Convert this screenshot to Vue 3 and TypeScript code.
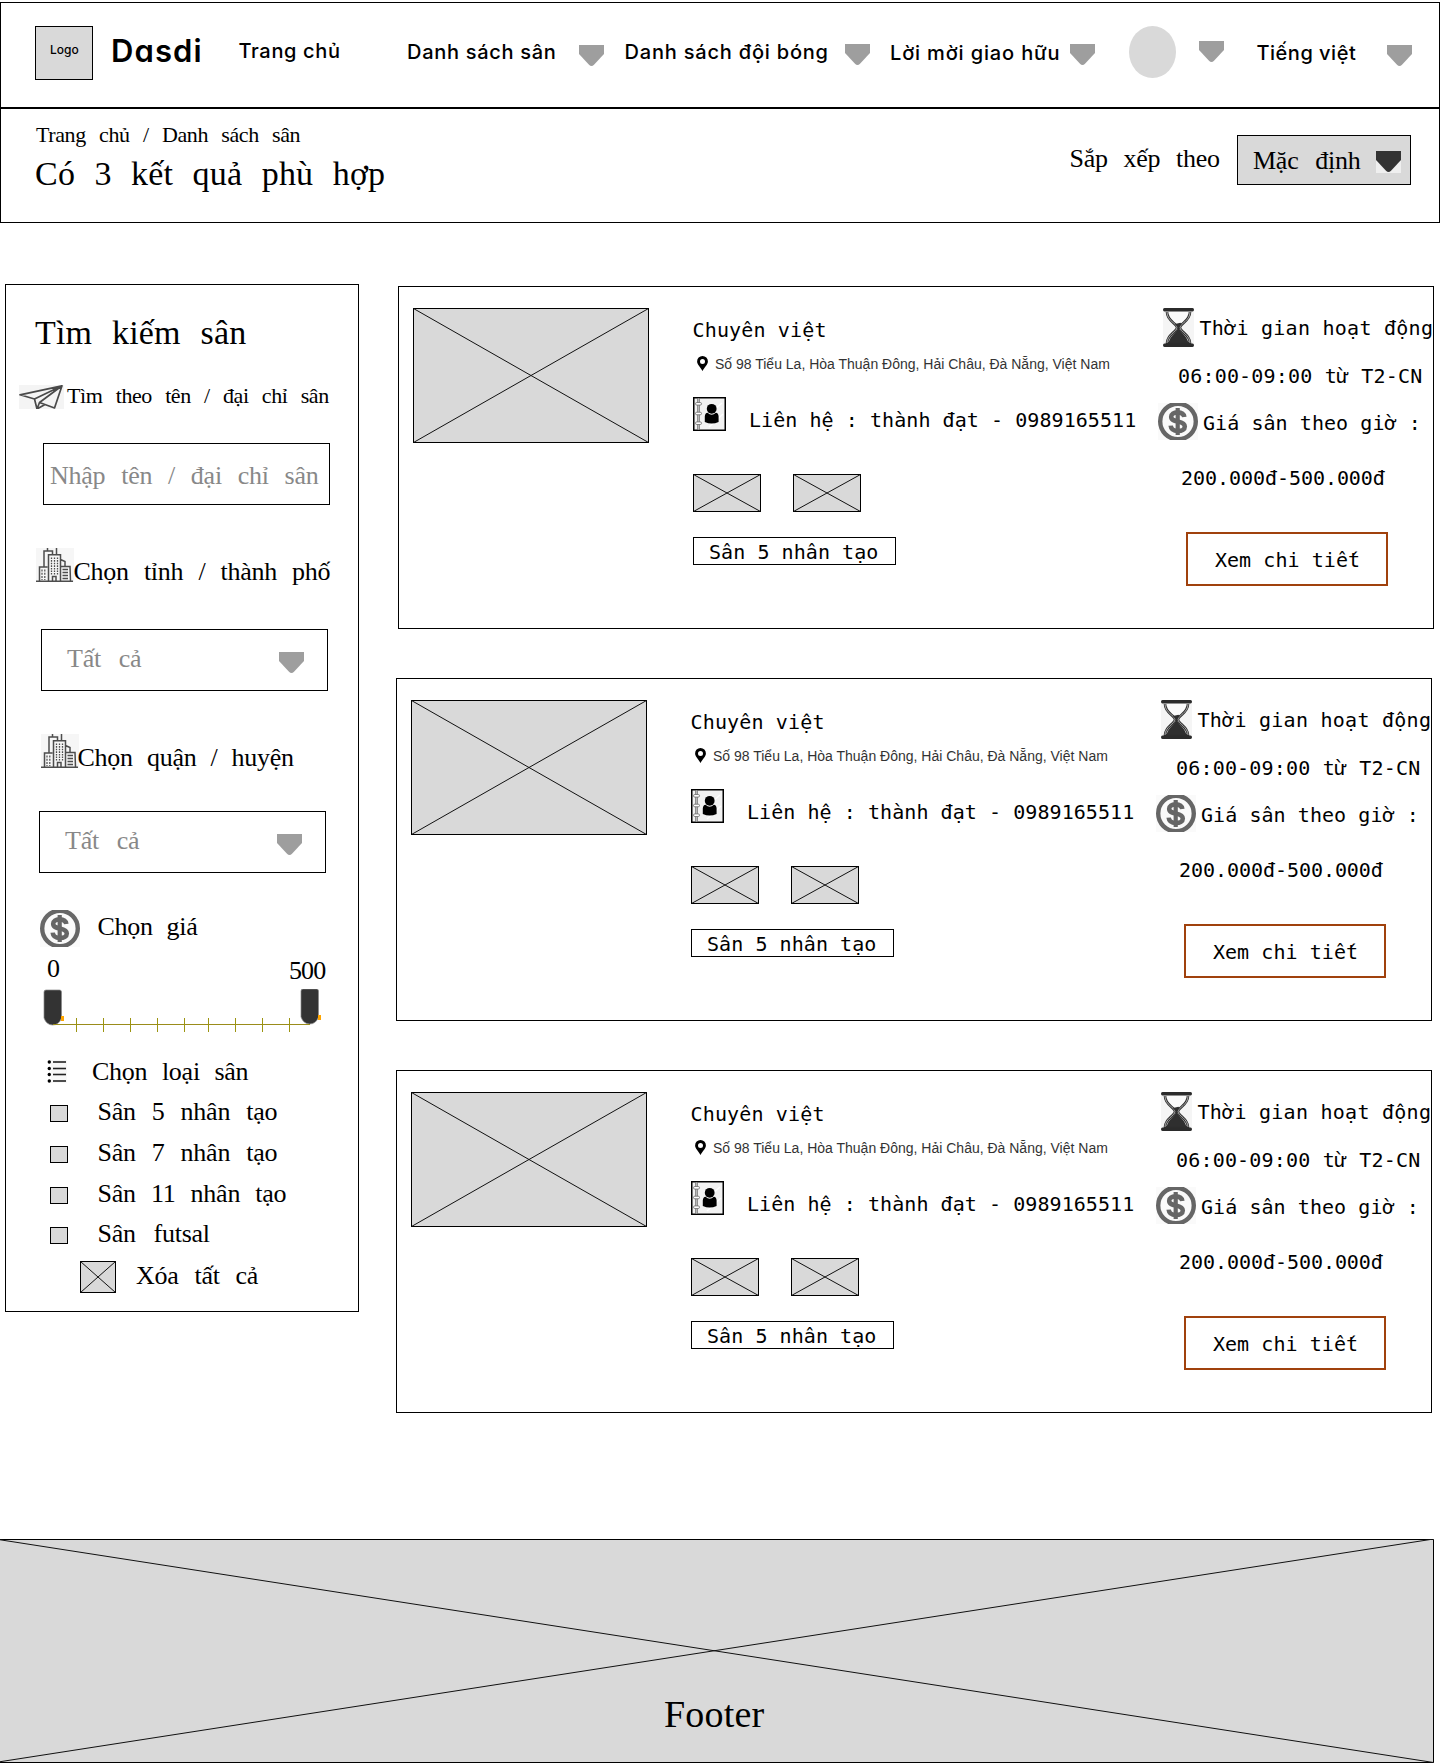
<script setup lang="ts">
interface FieldType {
  id: string
  label: string
}

interface Venue {
  id: number
  name: string
  address: string
  contact: string
  hours: string
  price: string
  tag: string
}

const fieldTypes: FieldType[] = [
  { id: 'five', label: 'Sân 5 nhân tạo' },
  { id: 'seven', label: 'Sân 7 nhân tạo' },
  { id: 'eleven', label: 'Sân 11 nhân tạo' },
  { id: 'futsal', label: 'Sân futsal' },
]

const venues: Venue[] = [1, 2, 3].map((id) => ({
  id,
  name: 'Chuyên việt',
  address: 'Số 98 Tiểu La, Hòa Thuận Đông, Hải Châu, Đà Nẵng, Việt Nam',
  contact: 'Liên hệ : thành đạt - 0989165511',
  hours: '06:00-09:00 từ T2-CN',
  price: '200.000đ-500.000đ',
  tag: 'Sân 5 nhân tạo',
}))

const ticks = [33.5, 60.5, 87.5, 114.5, 141.5, 165.5, 192.5, 219.5, 246.5]
</script>

<template>
  <svg class="defs" width="0" height="0" aria-hidden="true">
    <symbol id="caret" viewBox="0 0 25 22">
      <path d="M0 0H25V9L15 19.8Q12.5 22.2 10 19.8L0 9Z" fill="currentColor" />
    </symbol>
    <symbol id="coin" viewBox="0 0 40 37">
      <rect width="40" height="37" fill="#fafafa" />
      <circle cx="20" cy="18.5" r="17.8" fill="none" stroke="#666" stroke-width="4.4" />
      <path d="M26.3 14C25.8 10.8 23.4 9.4 19.6 9.4C15.6 9.4 13.2 11 13.2 13.8C13.2 16.8 15.8 17.5 19.8 18.4C24.2 19.4 26.8 20.4 26.8 23.4C26.8 26.3 24 27.9 20 27.9C15.6 27.9 13 26 12.7 22.6" fill="none" stroke="#666" stroke-width="4.6" />
      <path d="M19.7 5V32" stroke="#666" stroke-width="4.2" />
    </symbol>
    <symbol id="city" viewBox="0 0 38 34">
      <rect width="38" height="34" fill="#f6f6f6" />
      <g fill="none" stroke="#4d4d4d" stroke-width="1.5">
        <path d="M0 33.3H37M3.5 33V19H11.5M8 19V3H16.5V7M11.5 3V0M20.5 6.5V0M12.5 33V6.8H24.5V33M24.5 11.5L29 13.5V18.5M24.5 18.5H34L34.5 33M16.5 33V28.5H20V33" />
        <path d="M6 21.5V32M8.8 21.5V32" stroke-dasharray="2 1.2" stroke-width="1.2" />
        <path d="M15.5 9.5V26.5M18.5 9.5V26.5M21.5 9.5V26.5" stroke-dasharray="1.6 1" stroke-width="1.3" />
        <path d="M26.5 21.5H32M26.5 24.5H32M26.5 27.5H32M26.5 30.5H32" stroke-width="1.3" />
      </g>
    </symbol>
    <symbol id="hourglass" viewBox="0 0 31 39">
      <rect width="31" height="39" fill="#f5f5f5" />
      <path d="M4 4C4 13 14 15.5 14 19.5C14 23.5 4 27 4 35H27C27 27 17 23.5 17 19.5C17 15.5 27 13 27 4" fill="#fafafa" stroke="#2f2f2f" stroke-width="2.6" />
      <path d="M4 4C4 13 14 15.5 14 19.5C14 23.5 4 27 4 35M27 35C27 27 17 23.5 17 19.5C17 15.5 27 13 27 4" fill="none" stroke="#ddd" stroke-width=".7" />
      <path d="M12 16L17.5 14.8L18.5 16L16.2 19.5C16.2 24 24 27 25.3 34.5H5.7C7 27 14.8 24 14.8 19.5Z" fill="#2f2f2f" />
      <path d="M1.5 0H29.5Q31 0 31 1.7T29.5 3.4H1.5Q0 3.4 0 1.7T1.5 0ZM1.5 35.6H29.5Q31 35.6 31 37.3T29.5 39H1.5Q0 39 0 37.3T1.5 35.6Z" fill="#2b2b2b" />
    </symbol>
    <symbol id="contact" viewBox="0 0 33 34">
      <rect x=".75" y=".75" width="31.5" height="32.5" fill="#f2f2f2" stroke="#000" stroke-width="1.5" />
      <path d="M20 14L29 6M16 30L30 17" stroke="#fff" stroke-width="1.5" />
      <path d="M5.5 1.5V32.5" stroke="#666" stroke-width="2.4" />
      <path d="M5.5 1.5V32.5" stroke="#ddd" stroke-width=".7" />
      <g fill="#fff" stroke="#777" stroke-width=".9">
        <rect x="2.5" y="5.5" width="6" height="2.6" rx="1.3" />
        <rect x="2.5" y="15.2" width="6" height="2.6" rx="1.3" />
        <rect x="2.5" y="24.9" width="6" height="2.6" rx="1.3" />
      </g>
      <circle cx="18.7" cy="11.8" r="4.9" />
      <path d="M11.8 25V19.5Q12 16 14.6 15.8Q18.7 19.6 22.8 15.8Q25.4 16 25.6 19.5V25Q18.7 28 11.8 25Z" />
    </symbol>
    <symbol id="pin" viewBox="0 0 11 15">
      <path d="M5.5 0A5.4 5.4 0 0 1 10.9 5.5C10.9 8.5 7.3 11.5 5.5 15C3.7 11.5 .1 8.5 .1 5.5A5.4 5.4 0 0 1 5.5 0ZM5.5 3A2.5 2.5 0 1 0 5.5 8A2.5 2.5 0 1 0 5.5 3Z" fill-rule="evenodd" />
    </symbol>
    <symbol id="plane" viewBox="0 0 45 24">
      <rect width="45" height="24" fill="#f4f4f4" />
      <path d="M43 .8L1 9.8L15.5 14L43 .8L35.5 23L20.5 17.5L43 .8M15.5 14L18 24L20.5 17.5M18 24L26 19.5" fill="none" stroke="#4a4a4a" stroke-width="1.7" stroke-linejoin="round" />
    </symbol>
    <symbol id="thumb" viewBox="0 0 68 38">
      <rect x=".5" y=".5" width="67" height="37" fill="#d9d9d9" stroke="#000" />
      <path d="M.5 .5L67.5 37.5M67.5 .5L.5 37.5" stroke="#111" />
    </symbol>
  </svg>

  <div class="page">
    <header class="topbar">
      <div class="logo">Logo</div>
      <div class="brand">Dasdi</div>
      <a class="nav home">Trang chủ</a>
      <a class="nav fields">Danh sách sân</a>
      <svg class="caret low"><use href="#caret" /></svg>
      <a class="nav teams">Danh sách đội bóng</a>
      <svg class="caret"><use href="#caret" /></svg>
      <a class="nav invites">Lời mời giao hữu</a>
      <svg class="caret"><use href="#caret" /></svg>
      <div class="avatar"></div>
      <svg class="caret high"><use href="#caret" /></svg>
      <a class="nav lang">Tiếng việt</a>
      <svg class="caret low"><use href="#caret" /></svg>
    </header>

    <section class="heading">
      <div class="heading-text">
        <div class="crumbs">Trang chủ / Danh sách sân</div>
        <h1 class="result-title">Có 3 kết quả phù hợp</h1>
      </div>
      <div class="sort-label label">Sắp xếp theo</div>
      <div class="sort-select">
        <span class="label">Mặc định</span>
        <svg class="caret"><use href="#caret" /></svg>
      </div>
    </section>

    <main class="content">
      <aside class="sidebar">
        <h2 class="side-title">Tìm kiếm sân</h2>
        <div class="plane-row">
          <svg width="45" height="24"><use href="#plane" /></svg>
          <span>Tìm theo tên / đại chỉ sân</span>
        </div>
        <div class="search-input label">Nhập tên / đại chỉ sân</div>

        <div class="city-row">
          <svg width="38" height="34"><use href="#city" /></svg>
          <span class="label">Chọn tỉnh / thành phố</span>
        </div>
        <div class="select">
          <span class="label">Tất cả</span>
          <svg class="caret"><use href="#caret" /></svg>
        </div>

        <div class="city-row district">
          <svg width="38" height="34"><use href="#city" /></svg>
          <span class="label">Chọn quận / huyện</span>
        </div>
        <div class="select second">
          <span class="label">Tất cả</span>
          <svg class="caret"><use href="#caret" /></svg>
        </div>

        <div class="price-row">
          <svg width="40" height="37"><use href="#coin" /></svg>
          <span class="label">Chọn giá</span>
        </div>
        <div class="range-labels label">
          <span>0</span>
          <span class="max">500</span>
        </div>
        <svg class="slider" width="280" height="43" viewBox="0 0 280 43">
          <path d="M1 3Q1 1 3 1H16.5Q18.5 1 18.5 3V29Q16 36 9.7 36Q3.5 36 1 29Z" fill="#333" stroke="#888" stroke-width=".7" />
          <path d="M258 2Q258 0 260 0H273.5Q275.5 0 275.5 2V28Q273 35 266.7 35Q260.5 35 258 28Z" fill="#333" stroke="#888" stroke-width=".7" />
          <rect x="18" y="27" width="3" height="5" fill="#ffa500" />
          <rect x="275" y="26" width="3" height="5" fill="#ffa500" />
          <path d="M10 35.5H267" stroke="#9a8c1a" />
          <path v-for="x in ticks" :key="x" :d="`M${x} 29V43`" stroke="#9c9410" />
        </svg>

        <div class="type-row">
          <svg width="20" height="23" viewBox="0 0 20 23">
            <rect x="4" width="16" height="23" fill="#f8f8f8" />
            <g v-for="y in [2, 8.5, 14.5, 21]" :key="y">
              <circle cx="2.3" :cy="y" r="1.7" />
              <path :d="`M6 ${y}H19`" stroke="#222" stroke-width="1.6" />
            </g>
          </svg>
          <span class="label">Chọn loại sân</span>
        </div>
        <div v-for="type in fieldTypes" :key="type.id" class="check-row" :class="type.id">
          <i class="checkbox"></i>
          <span class="label">{{ type.label }}</span>
        </div>
        <div class="clear-row">
          <svg width="36" height="32" viewBox="0 0 36 32">
            <rect x=".5" y=".5" width="35" height="31" fill="#d9d9d9" stroke="#000" />
            <path d="M.5 .5L35.5 31.5M35.5 .5L.5 31.5" stroke="#111" />
          </svg>
          <span class="label">Xóa tất cả</span>
        </div>
      </aside>

      <section class="venues">
        <article v-for="venue in venues" :key="venue.id" class="card">
          <svg class="photo" width="236" height="135" viewBox="0 0 236 135">
            <rect x=".5" y=".5" width="235" height="134" fill="#d9d9d9" stroke="#000" />
            <path d="M.5 .5L235.5 134.5M235.5 .5L.5 134.5" stroke="#111" />
          </svg>
          <div class="info">
            <h3 class="venue-name mono">{{ venue.name }}</h3>
            <div class="address-row">
              <svg width="11" height="15"><use href="#pin" /></svg>
              <span>{{ venue.address }}</span>
            </div>
            <div class="contact-row">
              <svg width="33" height="34"><use href="#contact" /></svg>
              <span class="mono">{{ venue.contact }}</span>
            </div>
            <div class="thumbs">
              <svg width="68" height="38"><use href="#thumb" /></svg>
              <svg width="68" height="38"><use href="#thumb" /></svg>
            </div>
            <div class="tag mono">{{ venue.tag }}</div>
          </div>
          <div class="details">
            <div class="hours-row">
              <svg width="31" height="39"><use href="#hourglass" /></svg>
              <span class="mono">Thời gian hoạt động</span>
            </div>
            <div class="hours mono">{{ venue.hours }}</div>
            <div class="cost-row">
              <svg width="40" height="37"><use href="#coin" /></svg>
              <span class="mono">Giá sân theo giờ :</span>
            </div>
            <div class="cost mono">{{ venue.price }}</div>
            <button class="detail-button mono" type="button">Xem chi tiết</button>
          </div>
        </article>
      </section>
    </main>

    <footer class="footer">
      <svg width="1434" height="224" viewBox="0 0 1434 224">
        <path d="M0 .5H1433.5V223.5H0" fill="#d9d9d9" stroke="#000" />
        <path d="M-5 0L1433.5 223.5M1433.5 0L-5 223.5" stroke="#111" />
      </svg>
      <span>Footer</span>
    </footer>
  </div>
</template>

<style>
body {
  background: #fff;
}
</style>

<style scoped>
.defs {
  position: absolute;
}

.page {
  width: 1440px;
  height: 1763px;
  padding-top: 2px;
  overflow: hidden;
  color: #000;
  font-family: "Liberation Serif", "Times New Roman", serif;
  white-space: nowrap;
}

.page *,
.page {
  box-sizing: border-box;
}

svg {
  display: block;
  flex: none;
}

h1,
h2,
h3 {
  margin: 0;
  font-weight: 400;
}

.label {
  font-size: 26px;
  line-height: 30px;
  letter-spacing: -0.25px;
  word-spacing: 9px;
}

.mono {
  font-family: "DejaVu Sans Mono", monospace;
  font-size: 20px;
  line-height: 24px;
  letter-spacing: 0.06px;
}

.caret {
  width: 25px;
  height: 22px;
  color: #9e9e9e;
}

/* top navigation */
.topbar {
  display: grid;
  grid-template-columns: 76px 127.5px 168.5px 172px 45.5px 220.5px 45px 180px 59px 70px 57.5px 130.5px 50px;
  align-items: start;
  height: 106px;
  padding-left: 34px;
  border: 1px solid #000;
  font-family: Inter, sans-serif;
  font-weight: 500;
}

.logo {
  width: 58px;
  height: 54px;
  margin-top: 23px;
  padding: 16px 0 0 14px;
  border: 1px solid #000;
  background: #d9d9d9;
  font-size: 12px;
  line-height: 14px;
  font-feature-settings: "cv11";
}

.brand {
  margin-top: 30px;
  font-size: 31px;
  font-weight: 600;
  line-height: 36px;
  letter-spacing: 1.1px;
  font-feature-settings: "cv11";
}

.nav {
  margin-top: 37px;
  font-size: 20px;
  line-height: 24px;
}

.nav.home {
  margin-top: 36px;
  letter-spacing: 0.65px;
}

.nav.fields {
  letter-spacing: 0.7px;
}

.nav.teams {
  letter-spacing: 0.8px;
}

.nav.invites {
  margin-top: 38px;
  letter-spacing: 0.85px;
}

.nav.lang {
  margin-top: 38px;
  letter-spacing: 0.5px;
}

.topbar .caret {
  margin-top: 41px;
}

.topbar .caret.low {
  margin-top: 42px;
}

.topbar .caret.high {
  margin-top: 38px;
}

.avatar {
  width: 47px;
  height: 52px;
  margin-top: 23px;
  border-radius: 50%;
  background: #d9d9d9;
}

/* result heading */
.heading {
  display: flex;
  align-items: flex-start;
  height: 115px;
  padding-left: 34px;
  border: 1px solid #000;
}

.heading-text {
  width: 1034.5px;
  padding-top: 13px;
}

.crumbs {
  margin-left: 1px;
  font-size: 22px;
  line-height: 26px;
  letter-spacing: -0.4px;
  word-spacing: 8.2px;
}

.result-title {
  margin-top: 6px;
  font-size: 34px;
  line-height: 40px;
  letter-spacing: 0.2px;
  word-spacing: 10.7px;
}

.sort-label {
  width: 167.5px;
  margin-top: 35px;
  word-spacing: 9.5px;
}

.sort-select {
  display: flex;
  align-items: flex-start;
  width: 174px;
  height: 50px;
  margin-top: 26px;
  padding-left: 15px;
  border: 1px solid #000;
  background: #d9d9d9;
}

.sort-select .label {
  width: 123px;
  margin-top: 10px;
  word-spacing: 10.5px;
}

.sort-select .caret {
  margin-top: 15px;
  background: #efefef;
  color: #333;
}

/* filters */
.content {
  display: flex;
  align-items: flex-start;
  margin: 61px 0 0 5px;
}

.sidebar {
  width: 354px;
  height: 1028px;
  flex: none;
  border: 1px solid #000;
}

.side-title {
  margin: 28px 0 0 29px;
  font-size: 34px;
  line-height: 40px;
  letter-spacing: 0.2px;
  word-spacing: 11px;
}

.plane-row {
  display: flex;
  height: 24px;
  margin: 32px 0 0 13px;
  gap: 3px;
  font-size: 22px;
  line-height: 26px;
  letter-spacing: -0.4px;
  word-spacing: 8.1px;
}

.plane-row span {
  margin-top: -2px;
}

.search-input {
  width: 287px;
  height: 62px;
  margin: 34px 0 0 37px;
  padding: 17px 0 0 6px;
  border: 1px solid #000;
  color: #888;
  word-spacing: 9.6px;
}

.city-row {
  display: flex;
  height: 34px;
  margin: 43px 0 0 30px;
}

.city-row .label {
  margin: 9px 0 0 -0.5px;
  word-spacing: 8.8px;
}

.city-row.district {
  margin-left: 35px;
}

.city-row.district .label {
  margin-left: -1.5px;
  word-spacing: 7.8px;
}

.select {
  display: flex;
  width: 287px;
  height: 62px;
  margin: 47px 0 0 35px;
  padding-left: 25px;
  border: 1px solid #000;
  color: #888;
}

.select.second {
  margin: 43px 0 0 33px;
}

.select .label {
  width: 212px;
  margin-top: 14px;
  word-spacing: 11.5px;
}

.select .caret {
  margin-top: 22px;
}

.price-row {
  display: flex;
  height: 37px;
  margin: 37px 0 0 34px;
}

.price-row .label {
  margin: 2px 0 0 17.5px;
  word-spacing: 7.5px;
}

.range-labels {
  display: flex;
  justify-content: space-between;
  height: 42px;
  padding: 7px 32.5px 0 41px;
}

.range-labels .max {
  margin-top: 2px;
  letter-spacing: -0.8px;
}

.slider {
  margin-left: 37px;
}

.type-row {
  display: flex;
  height: 23px;
  margin: 28px 0 0 41px;
}

.type-row .label {
  margin: -3px 0 0 25px;
  word-spacing: 8.3px;
}

.check-row {
  display: flex;
  height: 17px;
  margin: 24px 0 0 44px;
}

.check-row.five {
  margin-top: 22px;
}

.check-row.futsal {
  margin-top: 23px;
}

.check-row .label {
  margin: -8px 0 0 29.5px;
  word-spacing: 8.9px;
}

.check-row.five .label,
.check-row.seven .label {
  word-spacing: 9.8px;
}

.check-row.futsal .label {
  word-spacing: 11.5px;
}

.checkbox {
  width: 18px;
  height: 17px;
  border: 1px solid #000;
  background: #d9d9d9;
}

.clear-row {
  display: flex;
  height: 32px;
  margin: 17px 0 0 74px;
}

.clear-row .label {
  margin: 0 0 0 20px;
  word-spacing: 9.6px;
}

/* venue cards */
.venues {
  display: flex;
  flex-direction: column;
  gap: 49px;
  margin: 2px 0 0 37px;
}

.card {
  display: flex;
  width: 1036px;
  height: 343px;
  border: 1px solid #000;
}

.card:first-child {
  margin-left: 2px;
}

.photo {
  margin: 21px 0 0 14px;
}

.info {
  width: 465px;
  margin-left: 44px;
}

.venue-name {
  margin: 31px 0 0 -0.5px;
  letter-spacing: 0.15px;
}

.address-row {
  display: flex;
  height: 16px;
  margin: 14px 0 0 4px;
  gap: 7px;
  color: #333;
  font-family: "Liberation Sans", Arial, sans-serif;
  font-size: 14px;
  line-height: 16px;
}

.address-row svg {
  color: #000;
}

.contact-row {
  display: flex;
  height: 34px;
  margin-top: 25px;
  gap: 23px;
}

.contact-row .mono {
  margin-top: 11px;
}

.thumbs {
  display: flex;
  margin-top: 43px;
  gap: 32px;
}

.tag {
  width: 203px;
  height: 28px;
  margin-top: 25px;
  padding: 2px 0 0 15px;
  border: 1px solid #000;
}

.details {
  width: 275px;
}

.hours-row {
  display: flex;
  height: 39px;
  margin: 21px 0 0 5px;
  gap: 5.5px;
}

.hours-row .mono {
  margin-top: 8px;
  letter-spacing: 0.26px;
}

.hours {
  margin: 17px 0 0 20px;
  letter-spacing: 0.18px;
}

.cost-row {
  display: flex;
  height: 37px;
  margin-top: 15px;
  gap: 5px;
}

.cost-row .mono {
  margin-top: 8px;
}

.cost {
  margin: 26px 0 0 23px;
  letter-spacing: -0.05px;
}

.detail-button {
  display: block;
  width: 202px;
  height: 54px;
  margin: 42px 0 0 28px;
  padding: 1px 0 0 1px;
  border: 2px solid #a0410d;
  background: #fff;
  color: #000;
}

/* footer */
.footer {
  display: grid;
  width: 1434px;
  height: 224px;
  margin-top: 126px;
  font-size: 38px;
  line-height: 44px;
  letter-spacing: 0.2px;
}

.footer svg,
.footer span {
  grid-area: 1 / 1;
}

.footer span {
  margin: 153px 0 0 664px;
}
</style>
